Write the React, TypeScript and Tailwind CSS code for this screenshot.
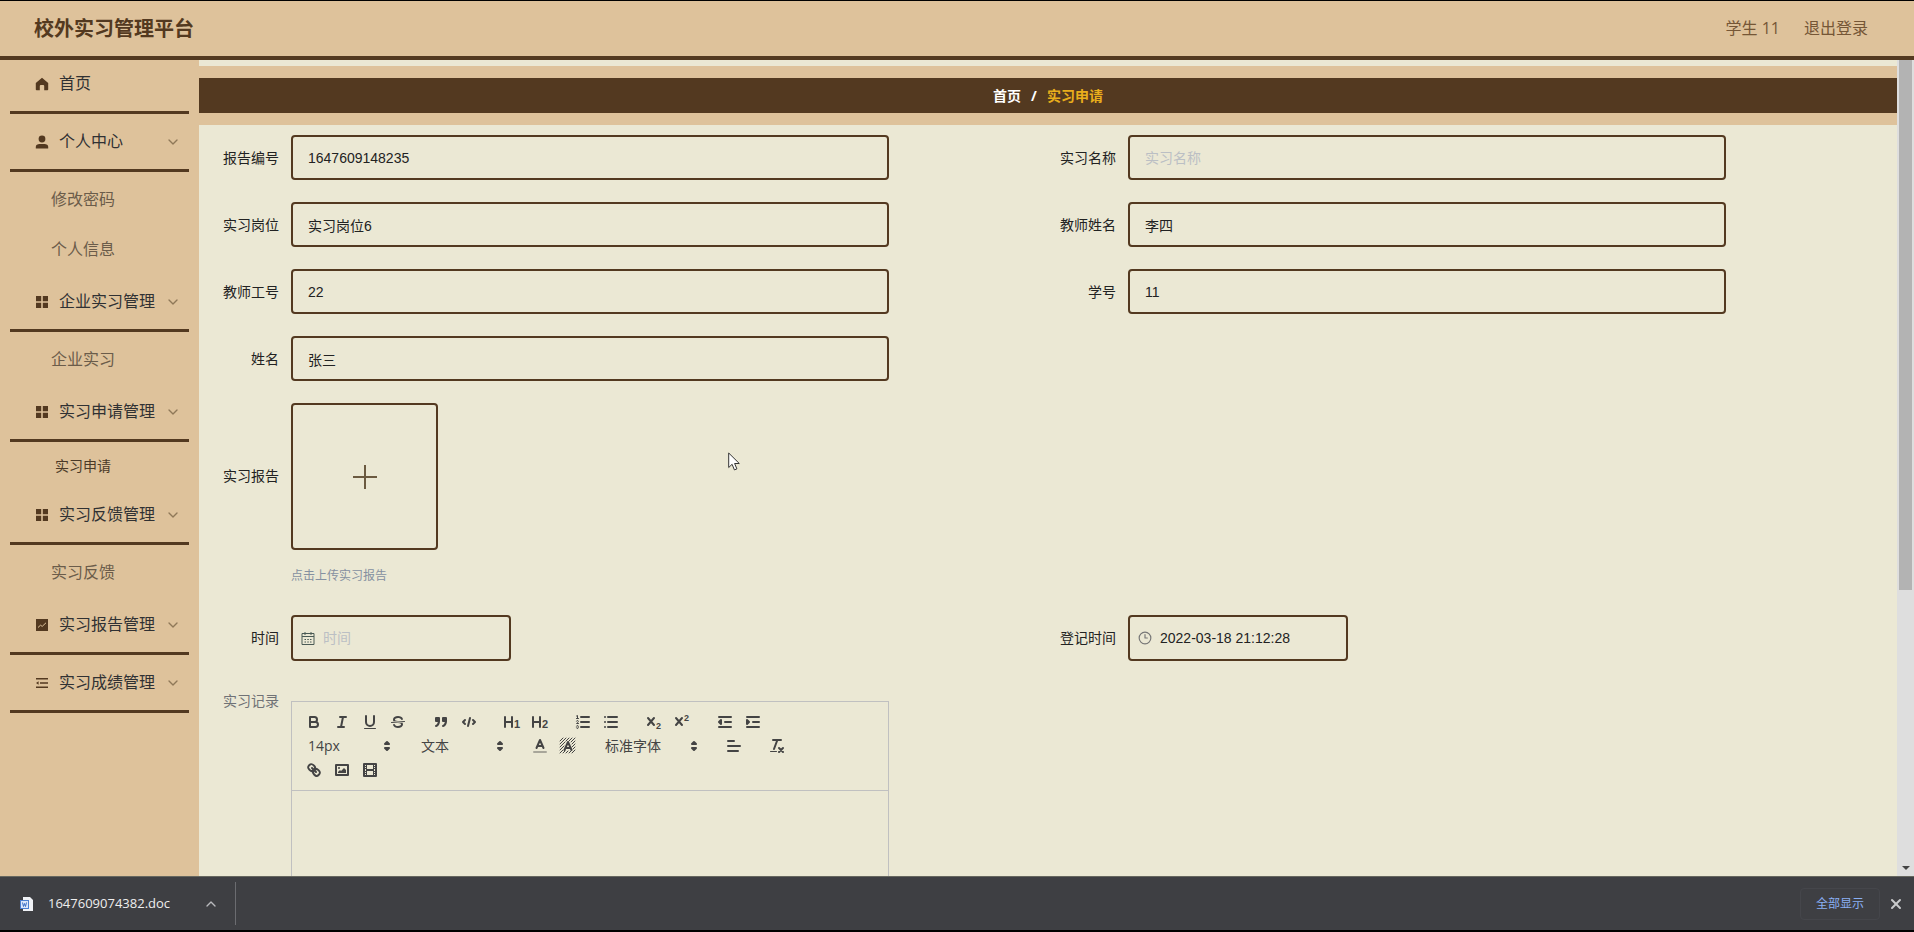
import type { ReactNode } from "react";
import { ChevronDown, ChevronUp, Clock3, X } from "lucide-react";

type MenuGroup = {
  title: string;
  icon: "home" | "user" | "grid" | "chart" | "list";
  children?: string[];
  compact?: boolean;
};

const menu: MenuGroup[] = [
  { title: "首页", icon: "home" },
  { title: "个人中心", icon: "user", children: ["修改密码", "个人信息"] },
  { title: "企业实习管理", icon: "grid", children: ["企业实习"] },
  { title: "实习申请管理", icon: "grid", children: ["实习申请"], compact: true },
  { title: "实习反馈管理", icon: "grid", children: ["实习反馈"] },
  { title: "实习报告管理", icon: "chart", children: [] },
  { title: "实习成绩管理", icon: "list", children: [] },
];

function MenuIcon({ name }: { name: MenuGroup["icon"] }) {
  return (
    <svg viewBox="0 0 14 14" className="size-3.5 shrink-0 fill-[#533920]">
      {name === "home" && (
        <path d="M7 .8 13.2 6v6.4a.8.8 0 0 1-.8.8H9.2V9a1 1 0 0 0-1-1H5.800a1 1 0 0 0-1 1v4.200H1.600a.8.8 0 0 1-.8-.8V6z" />
      )}
      {name === "user" && (
        <>
          <circle cx="7" cy="4" r="3.4" />
          <path d="M.8 11.800C.8 9.800 2.500 9 4.400 9h5.200c1.900 0 3.600.8 3.600 2.800v1.800H.8z" />
        </>
      )}
      {name === "grid" && (
        <path d="M1 1h5.2v5.2H1zM7.8 1H13v5.2H7.8zM1 7.8h5.2V13H1zM7.8 7.8H13V13H7.8z" />
      )}
      {name === "chart" && (
        <>
          <rect x="1" y="1" width="12" height="12" />
          <path d="M3 9.5 5.5 7.2 7.2 8.4 11 4.8" className="fill-none stroke-[#dec29b]" />
        </>
      )}
      {name === "list" && (
        <path d="M1 2h12v1.600H1zM5 6.200h8v1.600H5zM1 10.400h12V12H1zM3.600 5.200v3.600L1 7z" />
      )}
    </svg>
  );
}

function Sidebar() {
  return (
    <nav className="w-[199px] shrink-0 overflow-hidden bg-[#dec29b]">
      <ul className="-mt-1">
        {menu.map((group) => (
          <li key={group.title}>
            <a
              href="#"
              className="mx-2.5 flex h-[58px] items-center border-b-3 border-[#533920] pl-[25px] pr-2 text-base text-[#303133]"
            >
              <MenuIcon name={group.icon} />
              <span className="ml-2.5 flex-1">{group.title}</span>
              {group.children && (
                <ChevronDown className="size-4 text-[#8f7858]" strokeWidth={2} />
              )}
            </a>
            {group.children && group.children.length > 0 && (
              <ul className="pt-0.5">
                {group.children.map((child) => (
                  <li key={child}>
                    <a
                      href="#"
                      className={
                        group.compact
                          ? "flex h-[43px] items-center pl-[55px] text-sm text-[#4b3a28]"
                          : "flex h-[50px] items-center pl-[51px] pt-0.5 text-base text-[#6b5c4a]"
                      }
                    >
                      {child}
                    </a>
                  </li>
                ))}
              </ul>
            )}
          </li>
        ))}
      </ul>
    </nav>
  );
}

const fieldBox = "rounded border-2 border-[#533920] bg-transparent text-sm text-[#222]";

function Field({ id, label, value = "", placeholder }: { id: string; label: string; value?: string; placeholder?: string }) {
  return (
    <div className="mb-[22px] flex h-[45px] items-center">
      <label htmlFor={id} className="w-20 shrink-0 pr-3 text-right text-sm text-[#222]">
        {label}
      </label>
      <input
        id={id}
        defaultValue={value}
        placeholder={placeholder}
        className={`${fieldBox} h-full w-[598px] px-[15px] placeholder:text-[#bbbfc4]`}
      />
    </div>
  );
}

function DateField({ id, label, value, placeholder, icon }: { id: string; label: string; value?: string; placeholder?: string; icon: ReactNode }) {
  return (
    <div className="mb-[22px] flex h-[46px] items-center">
      <label htmlFor={id} className="w-20 shrink-0 pr-3 text-right text-sm text-[#222]">
        {label}
      </label>
      <div className={`${fieldBox} flex h-full w-[220px] items-center gap-2 pl-2`}>
        {icon}
        <input
          id={id}
          defaultValue={value}
          placeholder={placeholder}
          className="w-full min-w-0 bg-transparent outline-none placeholder:text-[#bbbfc4]"
        />
      </div>
    </div>
  );
}

function Tool({ label, children }: { label: string; children: ReactNode }) {
  return (
    <button type="button" aria-label={label} className="h-6 w-7 px-[5px] py-[3px]">
      <svg
        viewBox="0 0 18 18"
        className="size-[18px] fill-none stroke-[#444] stroke-2"
        strokeLinecap="round"
        strokeLinejoin="round"
      >
        {children}
      </svg>
    </button>
  );
}

function Picker({ label, value, wide }: { label: string; value: string; wide?: boolean }) {
  return (
    <div className={`relative flex h-6 items-center ${wide ? "w-[108px]" : "w-[98px]"}`}>
      <select
        aria-label={label}
        className="h-full w-full appearance-none bg-transparent pl-2 font-['Open_Sans','Noto_Sans_CJK_SC',sans-serif] text-sm text-[#444]"
      >
        <option>{value}</option>
      </select>
      <svg
        viewBox="0 0 18 18"
        className="pointer-events-none absolute right-0.5 size-[18px] fill-[#444] stroke-[#444] stroke-2"
        strokeLinejoin="round"
      >
        <polygon points="7 11 9 13 11 11 7 11" />
        <polygon points="7 7 9 5 11 7 7 7" />
      </svg>
    </div>
  );
}

function Group({ children }: { children: ReactNode }) {
  return <div className="mr-[15px] flex">{children}</div>;
}

function Editor() {
  const solid = "fill-[#444] stroke-none";
  const thin = "stroke-1";
  return (
    <div className="w-[598px] border border-[#c0c0c0]">
      <div className="flex flex-wrap border-b border-[#c0c0c0] p-2">
        <Group>
          <Tool label="加粗">
            <path d="M5,4H9.5A2.5,2.5,0,0,1,9.5,9H5Z" />
            <path d="M5,9h5.5A2.5,2.5,0,0,1,10.5,14H5Z" />
          </Tool>
          <Tool label="斜体">
            <path d="M7 4h6M5 14h6M8 14 10 4" />
          </Tool>
          <Tool label="下划线">
            <path d="M5,3V9a4,4,0,0,0,8,0V3" />
            <rect className={solid} x="3" y="15" width="12" height="1" rx=".5" />
          </Tool>
          <Tool label="删除线">
            <path className={thin} d="M15.5 8.5 2.5 9.5" />
            <path
              className={solid}
              d="M9.007,8C6.542,7.791,6,7.519,6,6.5,6,5.792,7.283,5,9,5c1.571,0,2.765.679,2.969,1.309a1,1,0,0,0,1.9-.617C13.356,4.106,11.354,3,9,3,6.2,3,4,4.538,4,6.5a3.2,3.2,0,0,0,.5,1.843Z"
            />
            <path
              className={solid}
              d="M8.984,10C11.457,10.208,12,10.479,12,11.5c0,.708-1.283,1.5-3,1.5-1.571,0-2.765-.679-2.969-1.309a1,1,0,1,0-1.9.617C4.644,13.894,6.646,15,9,15c2.8,0,5-1.538,5-3.5a3.2,3.2,0,0,0-.5-1.843Z"
            />
          </Tool>
        </Group>
        <Group>
          <Tool label="引用">
            <rect className="fill-[#444]" x="4" y="5" width="3" height="3" />
            <rect className="fill-[#444]" x="11" y="5" width="3" height="3" />
            <path className="fill-[#444]" d="M7,8c0,4.031-3,5-3,5" />
            <path className="fill-[#444]" d="M14,8c0,4.031-3,5-3,5" />
          </Tool>
          <Tool label="代码">
            <path d="M5 7 3 9 5 11M13 7 15 9 13 11M10 5 8 13" />
          </Tool>
        </Group>
        <Group>
          <Tool label="一级标题">
            <path d="M2 4v10M9 4v10M2 9h7" />
            <text x="11" y="15" className="fill-[#444] stroke-none text-[11px] font-bold">1</text>
          </Tool>
          <Tool label="二级标题">
            <path d="M2 4v10M9 4v10M2 9h7" />
            <text x="11" y="15" className="fill-[#444] stroke-none text-[11px] font-bold">2</text>
          </Tool>
        </Group>
        <Group>
          <Tool label="有序列表">
            <path d="M7 4h8M7 9h8M7 14h8" />
            <path className={thin} d="M2.5 5.5h2M2.5 3 3.5 2.5V5.5" />
            <path className={thin} d="M4.5,10.5h-2c0-.234,1.85-1.076,1.85-2.234A.959.959,0,0,0,2.5,8.156" />
            <path
              className={thin}
              d="M2.5,14.846a.959.959,0,0,0,1.85-.109A.7.7,0,0,0,3.75,14a.688.688,0,0,0,.6-.736.959.959,0,0,0-1.85-.109"
            />
          </Tool>
          <Tool label="无序列表">
            <path d="M6 4h9M6 9h9M6 14h9M3 4h0M3 9h0M3 14h0" />
          </Tool>
        </Group>
        <Group>
          <Tool label="下标">
            <path d="M3 5 9 12M9 5 3 12" />
            <text x="11" y="16" className="fill-[#444] stroke-none text-[9px] font-bold">2</text>
          </Tool>
          <Tool label="上标">
            <path d="M3 5 9 12M9 5 3 12" />
            <text x="11" y="8" className="fill-[#444] stroke-none text-[9px] font-bold">2</text>
          </Tool>
        </Group>
        <Group>
          <Tool label="减少缩进">
            <path d="M3 14h12M3 4h12M9 9h6" />
            <polyline className="fill-[#444]" points="5 7 5 11 3 9 5 7" />
          </Tool>
          <Tool label="增加缩进">
            <path d="M3 14h12M3 4h12M9 9h6" />
            <polyline className="fill-[#444]" points="3 7 3 11 5 9 3 7" />
          </Tool>
        </Group>
        <Group>
          <Picker label="字号" value="14px" />
        </Group>
        <Group>
          <Picker label="段落" value="文本" />
        </Group>
        <Group>
          <Tool label="字体颜色">
            <path className="opacity-40" d="M3 15h12" />
            <path d="M5.5 11 9 3 12.5 11M11.6 9H6.4" />
          </Tool>
          <Tool label="背景颜色">
            <path
              className={thin}
              d="M1 4 4 1M1 7 7 1M1 10 6 5M7 4 10 1M1 13 5 9M1 16 4 13M10 4 13 1M12 5 16 1M13 7 16 4M13 10 16 7M14 12 16 10M4 16 6 14M7 16 9 14M10 16 12 14M13 16 16 13"
            />
            <path d="M5.5 13 9 5 12.5 13M11.6 11H6.4" />
          </Tool>
        </Group>
        <Group>
          <Picker label="字体" value="标准字体" wide />
        </Group>
        <Group>
          <Tool label="对齐">
            <path d="M3 9h12M3 14h10M3 4h6" />
          </Tool>
        </Group>
        <Group>
          <Tool label="清除格式">
            <path d="M5 3h8M6 12 9.35 3M11 11 15 15M15 11 11 15" />
            <rect className={solid} x="2" y="14" width="7" height="1" rx=".5" />
          </Tool>
        </Group>
        <Group>
          <Tool label="链接">
            <path d="M7 7 11 11" />
            <path d="M8.9,4.577a3.476,3.476,0,0,1,.36,4.679A3.476,3.476,0,0,1,4.577,8.9C3.185,7.5,2.035,6.4,4.217,4.217S7.5,3.185,8.9,4.577Z" />
            <path d="M13.423,9.1a3.476,3.476,0,0,0-4.679-.36,3.476,3.476,0,0,0,.36,4.679c1.392,1.392,2.5,2.542,4.679.36S14.815,10.5,13.423,9.1Z" />
          </Tool>
          <Tool label="图片">
            <rect x="3" y="4" width="12" height="10" />
            <circle className={solid} cx="6" cy="7" r="1" />
            <polyline className={solid} points="5 12 5 11 7 9 8 10 11 7 13 9 13 12 5 12" />
          </Tool>
          <Tool label="视频">
            <rect x="3" y="3" width="12" height="12" />
            <path className={thin} d="M5.5 3v12M12.5 3v12M3 5.5h2M3 7.5h2M3 10.5h2M3 12.5h2M13 5.5h2M13 7.5h2M13 10.5h2M13 12.5h2" />
            <path d="M6 9h6" />
          </Tool>
        </Group>
      </div>
      <div contentEditable role="textbox" aria-label="实习记录" className="h-[300px] outline-none" />
    </div>
  );
}

function CalendarIcon() {
  return (
    <svg viewBox="0 0 14 14" className="size-3.5 shrink-0 fill-none stroke-[#4a5a55]">
      <path d="M1 2.5h12v11H1zM1 5.5h12M4 1v3M10 1v3M3.5 8.5H5M6.3 8.5h1.500M9 8.5h1.500M3.5 11H5M6.3 11h1.500M9 11h1.500" />
    </svg>
  );
}

function ApplyForm() {
  return (
    <form className="grid grid-cols-2 px-3 pt-2.5">
      <Field id="code" label="报告编号" value="1647609148235" />
      <Field id="name" label="实习名称" placeholder="实习名称" />
      <Field id="post" label="实习岗位" value="实习岗位6" />
      <Field id="teacher" label="教师姓名" value="李四" />
      <Field id="teacherNo" label="教师工号" value="22" />
      <Field id="studentNo" label="学号" value="11" />
      <Field id="student" label="姓名" value="张三" />

      <div className="col-span-2 mb-[22px] flex h-[190px]">
        <label htmlFor="report" className="flex h-[146px] w-20 shrink-0 items-center justify-end pr-3 text-sm text-[#222]">
          实习报告
        </label>
        <div>
          <button
            id="report"
            type="button"
            className="flex size-[147px] items-center justify-center rounded border-2 border-[#533920]"
          >
            <svg viewBox="0 0 24 24" className="size-6 fill-none stroke-[#6b5a40] stroke-2">
              <path d="M12 0v24M0 12h24" />
            </svg>
          </button>
          <p className="mt-4 text-xs leading-5 text-[#8590a0]">点击上传实习报告</p>
        </div>
      </div>

      <DateField id="date" label="时间" placeholder="时间" icon={<CalendarIcon />} />
      <DateField
        id="created"
        label="登记时间"
        value="2022-03-18 21:12:28"
        icon={<Clock3 className="size-3.5 shrink-0 text-[#777]" strokeWidth={2} />}
      />

      <div className="col-span-2 flex">
        <div className="w-20 shrink-0 pr-3 pt-2 text-right text-sm text-[#707276]">实习记录</div>
        <div className="pt-[18px]">
          <Editor />
        </div>
      </div>
    </form>
  );
}

function ScrollBar() {
  return (
    <div className="flex w-[17px] shrink-0 flex-col items-center justify-between bg-[#dedede]">
      <div className="h-[65%] w-[13px] bg-[#b3b3b3]" />
      <svg viewBox="0 0 8 4" className="mb-[6px] h-1 w-2 fill-[#444]">
        <path d="M0 0h8L4 4z" />
      </svg>
    </div>
  );
}

function DownloadBar() {
  return (
    <footer className="flex h-[56px] shrink-0 items-center border-b-2 border-t border-b-black border-t-[#66675f] bg-[#3e3f43] font-['Open_Sans','Noto_Sans_CJK_SC',sans-serif]">
      <div className="flex h-[43px] w-[236px] items-center border-r border-[#6b6c70] pl-5 pr-4">
        <svg viewBox="0 0 14 16" className="h-4 w-3.5">
          <path d="M3 1h7l3 3v11H3z" className="fill-[#f0f2f6]" />
          <rect x=".5" y="4.5" width="8" height="8" className="fill-[#dbe7fa] stroke-[#4b7fd0]" />
          <path d="M2.5 6.5 3.500 10.500 4.500 7.500 5.500 10.500 6.500 6.5" className="fill-none stroke-[#3b6fc6]" />
        </svg>
        <span className="ml-3.5 flex-1 text-[13px] text-[#eeeeee]">1647609074382.doc</span>
        <button type="button" aria-label="更多选项">
          <ChevronUp className="size-4 text-[#b9babd]" />
        </button>
      </div>
      <button
        type="button"
        className="ml-auto h-8 w-20 rounded border border-[#45464b] text-xs text-[#8ab0f5]"
      >
        全部显示
      </button>
      <button type="button" aria-label="关闭" className="ml-2 mr-2.5">
        <X className="size-4 text-[#c9cacc]" strokeWidth={3} />
      </button>
    </footer>
  );
}

export default function App() {
  return (
    <div className="relative flex h-screen flex-col overflow-hidden bg-[#ebe8d4] font-['Liberation_Sans','Noto_Sans_CJK_SC',sans-serif]">
      <header className="flex h-[60px] shrink-0 items-center justify-between border-b-4 border-t border-b-[#533920] border-t-black bg-[#dec29b] pl-[34px] pr-[46px] text-[#533920]">
        <h1 className="text-xl font-bold">校外实习管理平台</h1>
        <div className="flex gap-6 pb-0.5 font-['Open_Sans','Noto_Sans_CJK_SC',sans-serif] text-base text-[#755636]">
          <span>学生 11</span>
          <a href="#">退出登录</a>
        </div>
      </header>

      <div className="flex min-h-0 flex-1">
        <Sidebar />
        <main className="min-w-0 flex-1 overflow-hidden pt-1.5">
          <div className="border-y-12 border-[#dec29b] bg-[#533920]">
            <div className="flex h-[35px] items-center justify-center gap-2.5 font-['Open_Sans','Noto_Sans_CJK_SC',sans-serif] text-sm font-bold">
              <a href="#" className="text-white">首页</a>
              <span className="text-white">/</span>
              <span className="text-[#e9ae1c]">实习申请</span>
            </div>
          </div>
          <ApplyForm />
        </main>
        <ScrollBar />
      </div>

      <DownloadBar />

      {/* pointer */}
      <svg viewBox="0 0 12 19" className="absolute left-[728px] top-[452px] h-[19px] w-3 fill-white stroke-[#333]">
        <path d="M.7 1v14.500l3.400-3.200 2.300 5.600 2.500-1-2.300-5.400h4.700z" />
      </svg>
    </div>
  );
}
